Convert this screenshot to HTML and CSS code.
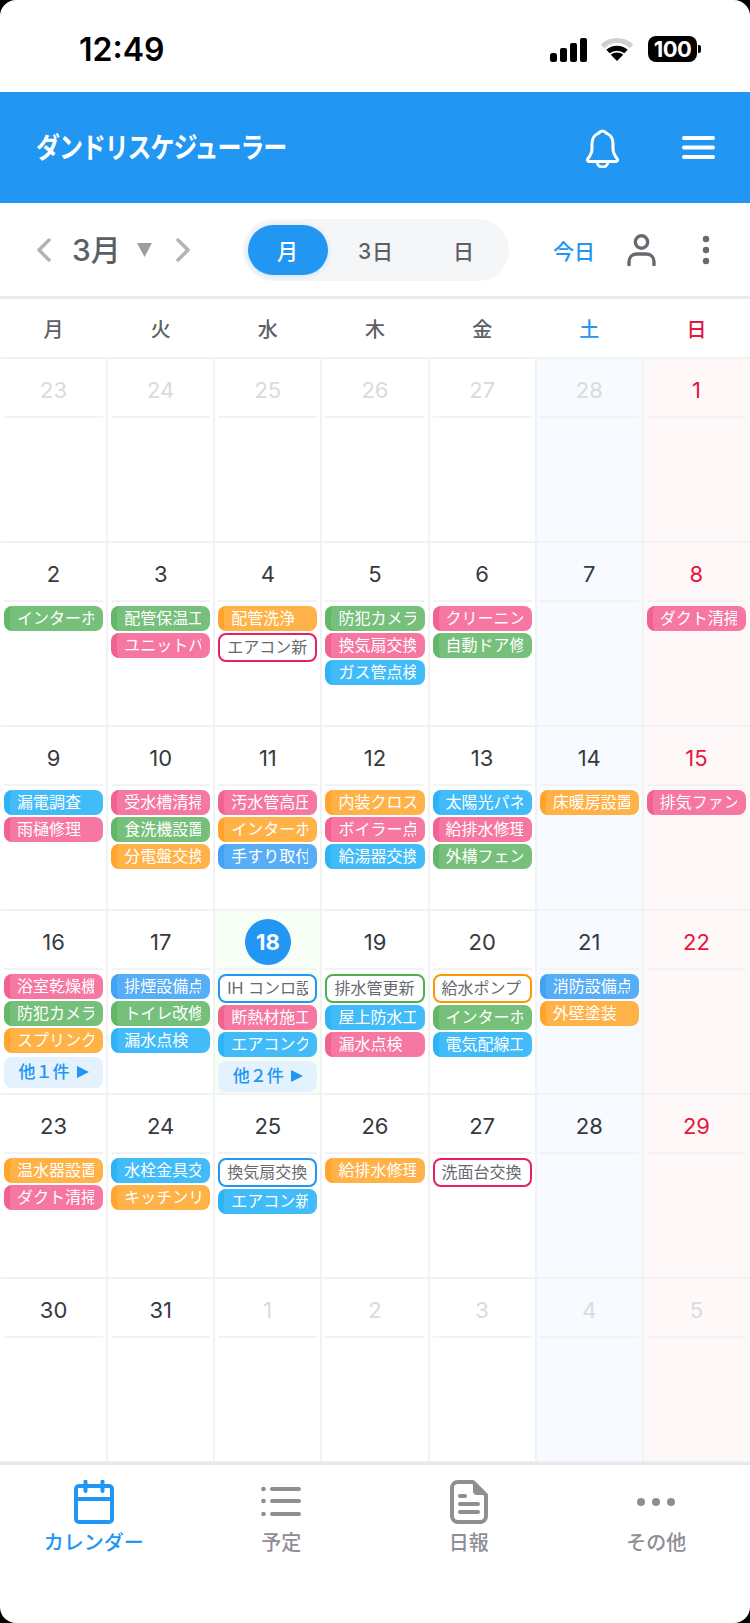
FILE: index.html
```html
<!DOCTYPE html>
<html lang="ja">
<head>
<meta charset="utf-8">
<title>ダンドリスケジューラー</title>
<link rel="stylesheet" href="styles.css">
</head>
<body>
<div class="page">
  <div class="status">
    <span class="time">12:49</span>
    <div class="status-icons">
      <svg class="signal" width="37" height="24" viewBox="0 0 37 24"><rect x="0" y="15" width="7" height="9" rx="2.5"/><rect x="10" y="10" width="7" height="14" rx="2"/><rect x="20" y="5" width="7" height="19" rx="2"/><rect x="30" y="0" width="7" height="24" rx="2"/></svg>
      <svg class="wifi" width="32" height="24" viewBox="0 0 32 24"><path class="wifi-far" d="M1.500 8.500C9.500 0.500 22.500 0.500 30.500 8.500"/><path class="wifi-near" d="M7 13.500C12 9 20 9 25 13.500"/><path class="wifi-tip" d="M16 23L9.800 16.800C13 13.600 19 13.600 22.200 16.800Z"/></svg>
      <div class="battery"><span class="battery-body">100</span><span class="battery-nub"></span></div>
    </div>
  </div>

  <header class="appbar">
    <span class="logo">ダンドリスケジューラー</span>
    <div class="appbar-actions">
      <svg width="33" height="39" viewBox="0 0 33 39" class="bell"><path d="M16.500 2C18.800 2 19.600 4 21.800 5C25.400 6.800 27 10 27 15V20C27 24 29 27 31.300 30C32 31.200 31.400 32.500 30 32.500H3C1.600 32.500 1 31.200 1.700 30C4 27 6 24 6 20V15C6 10 7.600 6.800 11.200 5C13.400 4 14.200 2 16.500 2Z"/><path d="M11 32.500A5.500 5.500 0 0 0 22 32.500"/></svg>
      <svg width="33" height="23" viewBox="0 0 33 23" class="burger"><rect y="0" width="33" height="4" rx="2"/><rect y="9.500" width="33" height="4" rx="2"/><rect y="19" width="33" height="4" rx="2"/></svg>
    </div>
  </header>

  <div class="toolbar">
    <svg class="chev prev" width="15" height="24" viewBox="0 0 15 24"><path d="M13 2L3 12L13 22"/></svg>
    <span class="month">3月</span>
    <svg class="caret" width="15" height="14" viewBox="0 0 15 14"><path d="M0 0H15L7.500 14Z"/></svg>
    <svg class="chev next" width="15" height="24" viewBox="0 0 15 24"><path d="M2 2L12 12L2 22"/></svg>
    <div class="segment">
      <span class="seg active">月</span>
      <span class="seg">3日</span>
      <span class="seg">日</span>
    </div>
    <span class="today-link">今日</span>
    <svg class="person" width="29" height="32" viewBox="0 0 29 32"><circle cx="14.500" cy="8" r="6.200"/><path d="M2 31V28C2 23.500 5 20 9.500 20H19.500C24 20 27 23.500 27 28V31"/></svg>
    <svg class="kebab" width="8" height="30" viewBox="0 0 8 30"><circle cx="4" cy="4" r="3.200"/><circle cx="4" cy="15" r="3.200"/><circle cx="4" cy="26" r="3.200"/></svg>
  </div>

  <div class="weekdays">
    <span>月</span><span>火</span><span>水</span><span>木</span><span>金</span><span class="sat-label">土</span><span class="sun-label">日</span>
  </div>

  <div class="grid">
    <div class="cell muted"><div class="date"><b>23</b></div></div>
    <div class="cell muted"><div class="date"><b>24</b></div></div>
    <div class="cell muted"><div class="date"><b>25</b></div></div>
    <div class="cell muted"><div class="date"><b>26</b></div></div>
    <div class="cell muted"><div class="date"><b>27</b></div></div>
    <div class="cell muted sat"><div class="date"><b>28</b></div></div>
    <div class="cell sun"><div class="date"><b>1</b></div></div>

    <div class="cell"><div class="date"><b>2</b></div>
      <div class="ev green"><span>インターホ</span></div></div>
    <div class="cell"><div class="date"><b>3</b></div>
      <div class="ev green"><span>配管保温工</span></div>
      <div class="ev pink"><span>ユニットバ</span></div></div>
    <div class="cell"><div class="date"><b>4</b></div>
      <div class="ev orange"><span>配管洗浄</span></div>
      <div class="ev out pink"><span>エアコン新</span></div></div>
    <div class="cell"><div class="date"><b>5</b></div>
      <div class="ev green"><span>防犯カメラ</span></div>
      <div class="ev pink"><span>換気扇交換</span></div>
      <div class="ev sky"><span>ガス管点検</span></div></div>
    <div class="cell"><div class="date"><b>6</b></div>
      <div class="ev pink"><span>クリーニン</span></div>
      <div class="ev green"><span>自動ドア修</span></div></div>
    <div class="cell sat"><div class="date"><b>7</b></div></div>
    <div class="cell sun"><div class="date"><b>8</b></div>
      <div class="ev pink"><span>ダクト清掃</span></div></div>

    <div class="cell"><div class="date"><b>9</b></div>
      <div class="ev sky"><span>漏電調査</span></div>
      <div class="ev pink"><span>雨樋修理</span></div></div>
    <div class="cell"><div class="date"><b>10</b></div>
      <div class="ev pink"><span>受水槽清掃</span></div>
      <div class="ev green"><span>食洗機設置</span></div>
      <div class="ev orange"><span>分電盤交換</span></div></div>
    <div class="cell"><div class="date"><b>11</b></div>
      <div class="ev pink"><span>汚水管高圧</span></div>
      <div class="ev orange"><span>インターホ</span></div>
      <div class="ev blue"><span>手すり取付</span></div></div>
    <div class="cell"><div class="date"><b>12</b></div>
      <div class="ev orange"><span>内装クロス</span></div>
      <div class="ev pink"><span>ボイラー点</span></div>
      <div class="ev sky"><span>給湯器交換</span></div></div>
    <div class="cell"><div class="date"><b>13</b></div>
      <div class="ev sky"><span>太陽光パネ</span></div>
      <div class="ev pink"><span>給排水修理</span></div>
      <div class="ev green"><span>外構フェン</span></div></div>
    <div class="cell sat"><div class="date"><b>14</b></div>
      <div class="ev orange"><span>床暖房設置</span></div></div>
    <div class="cell sun"><div class="date"><b>15</b></div>
      <div class="ev pink"><span>排気ファン</span></div></div>

    <div class="cell"><div class="date"><b>16</b></div>
      <div class="ev pink"><span>浴室乾燥機</span></div>
      <div class="ev green"><span>防犯カメラ</span></div>
      <div class="ev orange"><span>スプリンク</span></div>
      <div class="more">他１件<i class="tri"></i></div></div>
    <div class="cell"><div class="date"><b>17</b></div>
      <div class="ev blue"><span>排煙設備点</span></div>
      <div class="ev green"><span>トイレ改修</span></div>
      <div class="ev sky"><span>漏水点検</span></div></div>
    <div class="cell today"><div class="date"><b>18</b></div>
      <div class="ev out blue"><span>IH コンロ設</span></div>
      <div class="ev pink"><span>断熱材施工</span></div>
      <div class="ev sky"><span>エアコンク</span></div>
      <div class="more">他２件<i class="tri"></i></div></div>
    <div class="cell"><div class="date"><b>19</b></div>
      <div class="ev out green"><span>排水管更新</span></div>
      <div class="ev sky"><span>屋上防水工</span></div>
      <div class="ev pink"><span>漏水点検</span></div></div>
    <div class="cell"><div class="date"><b>20</b></div>
      <div class="ev out orange"><span>給水ポンプ</span></div>
      <div class="ev green"><span>インターホ</span></div>
      <div class="ev sky"><span>電気配線工</span></div></div>
    <div class="cell sat"><div class="date"><b>21</b></div>
      <div class="ev blue"><span>消防設備点</span></div>
      <div class="ev orange"><span>外壁塗装</span></div></div>
    <div class="cell sun"><div class="date"><b>22</b></div></div>

    <div class="cell"><div class="date"><b>23</b></div>
      <div class="ev orange"><span>温水器設置</span></div>
      <div class="ev pink"><span>ダクト清掃</span></div></div>
    <div class="cell"><div class="date"><b>24</b></div>
      <div class="ev sky"><span>水栓金具交</span></div>
      <div class="ev orange"><span>キッチンリ</span></div></div>
    <div class="cell"><div class="date"><b>25</b></div>
      <div class="ev out blue"><span>換気扇交換</span></div>
      <div class="ev sky"><span>エアコン新</span></div></div>
    <div class="cell"><div class="date"><b>26</b></div>
      <div class="ev orange"><span>給排水修理</span></div></div>
    <div class="cell"><div class="date"><b>27</b></div>
      <div class="ev out pink"><span>洗面台交換</span></div></div>
    <div class="cell sat"><div class="date"><b>28</b></div></div>
    <div class="cell sun"><div class="date"><b>29</b></div></div>

    <div class="cell"><div class="date"><b>30</b></div></div>
    <div class="cell"><div class="date"><b>31</b></div></div>
    <div class="cell muted"><div class="date"><b>1</b></div></div>
    <div class="cell muted"><div class="date"><b>2</b></div></div>
    <div class="cell muted"><div class="date"><b>3</b></div></div>
    <div class="cell muted sat"><div class="date"><b>4</b></div></div>
    <div class="cell muted sun"><div class="date"><b>5</b></div></div>
  </div>

  <nav class="tabs">
    <div class="tab current">
      <svg width="40" height="44" viewBox="0 0 40 44"><rect x="2" y="6" width="36" height="36" rx="3"/><path d="M2 19H38M11.500 1.500V11M28.500 1.500V11"/></svg>
      <span>カレンダー</span>
    </div>
    <div class="tab">
      <svg width="40" height="44" viewBox="0 0 40 44"><circle cx="2.500" cy="9" r="2.300" class="solid"/><circle cx="2.500" cy="21" r="2.300" class="solid"/><circle cx="2.500" cy="34" r="2.300" class="solid"/><path d="M11 9H38M11 21H38M11 34H38"/></svg>
      <span>予定</span>
    </div>
    <div class="tab">
      <svg width="38" height="44" viewBox="0 0 38 44"><path d="M8 2H23L36 15V36C36 39.500 33.500 42 30 42H8C4.500 42 2 39.500 2 36V8C2 4.500 4.500 2 8 2Z"/><path class="solid" d="M23 2V11C23 13.500 24.500 15 27 15H36Z"/><path d="M10 16H15M10 24H28M10 32H28"/></svg>
      <span>日報</span>
    </div>
    <div class="tab">
      <svg width="40" height="44" viewBox="0 0 40 44"><circle cx="5" cy="22" r="4" class="solid"/><circle cx="20" cy="22" r="4" class="solid"/><circle cx="35" cy="22" r="4" class="solid"/></svg>
      <span>その他</span>
    </div>
  </nav>
  <div class="screen-corners"></div>
</div>
</body>
</html>
```
FILE: styles.css
```css
* { box-sizing: border-box; }
html, body { margin: 0; padding: 0; background: #fff; }
body { font-family: Inter, "Noto Sans CJK JP", sans-serif; }
.page { position: relative; width: 750px; height: 1623px; overflow: hidden; display: flex; flex-direction: column; background: #fff; }

/* status bar */
.status { height: 92px; flex: none; display: flex; justify-content: space-between; padding: 36px 49px 0 79px; }
.time { font-size: 32px; font-weight: 600; line-height: 28px; color: #000; }
.status-icons { display: flex; align-items: flex-start; }
.signal { margin: 2px 14px 0 0; fill: #000; }
.wifi { margin: 2px 15px 0 0; }
.wifi path { fill: none; stroke-width: 5; stroke: #000; }
.wifi .wifi-far { stroke: #cfcfcf; }
.wifi .wifi-tip { fill: #000; stroke: none; }
.battery { display: flex; align-items: center; }
.battery-body { width: 49px; height: 26px; border-radius: 8px; background: #000; color: #fff; font-size: 22px; font-weight: 700; letter-spacing: -.5px; line-height: 26px; text-align: center; }
.battery-nub { width: 3px; height: 8px; background: #000; border-radius: 0 2px 2px 0; margin-left: 1px; }

/* app bar */
.appbar { height: 111px; flex: none; background: #2196f3; display: flex; align-items: center; justify-content: space-between; padding: 0 35px 0 36px; }
.logo { display: inline-block; color: #fff; font-size: 24px; font-weight: 700; letter-spacing: -1.1px; line-height: 32px; transform: scaleY(1.2); }
.appbar-actions { display: flex; align-items: center; gap: 63px; }
.bell { fill: none; stroke: #fff; stroke-width: 3; stroke-linejoin: round; stroke-linecap: round; margin-top: 2px; }
.burger { fill: #fff; }

/* toolbar */
.toolbar { height: 96px; flex: none; display: flex; align-items: center; padding-left: 36px; border-bottom: 3px solid #e8eaed; }
.chev { fill: none; stroke: #b0b3b8; stroke-width: 3.5; stroke-linecap: round; stroke-linejoin: round; }
.month { margin-left: 21px; width: 46px; font-size: 30px; font-weight: 500; line-height: 40px; color: #5a5f66; white-space: nowrap; }
.caret { margin-left: 19px; fill: #9a9da2; }
.next { margin-left: 24px; }
.segment { margin-left: 52px; width: 266px; height: 62px; padding: 6px 5px; border-radius: 31px; background: #f5f6f8; display: grid; grid-template-columns: repeat(3, 1fr); gap: 8px; }
.seg { display: flex; align-items: center; justify-content: center; border-radius: 25px; font-size: 21px; font-weight: 500; letter-spacing: 1px; color: #5c6066; }
.seg.active { background: #2196f3; color: #fff; box-shadow: 0 1px 6px rgba(33, 150, 243, .18); }
.today-link { margin-left: 44px; width: 42px; font-size: 21px; font-weight: 500; color: #2196f3; white-space: nowrap; }
.person { margin-left: 32px; fill: none; stroke: #666a70; stroke-width: 3.4; stroke-linecap: round; }
.kebab { margin-left: 46px; fill: #666a70; }

/* weekdays */
.weekdays { height: 59px; flex: none; display: grid; grid-template-columns: repeat(7, 1fr); align-items: center; text-align: center; font-size: 20px; font-weight: 500; color: #5c6066; border-bottom: 1px solid #f1f2f4; }
.sat-label { color: #2196f3; }
.sun-label { color: #e5173f; }

/* grid */
.grid { height: 1104px; flex: none; display: grid; grid-template-columns: repeat(7, 1fr); grid-template-rows: repeat(6, 184px); }
.cell { border: 1px solid #f1f2f4; padding: 8px 3px 0; display: flex; flex-direction: column; gap: 2px; min-width: 0; overflow: hidden; }
.cell:nth-child(7n+1) { border-left-color: transparent; }
.cell:nth-child(7n) { border-right-color: transparent; }
.sat { background: #f7fafe; }
.sun { background: #fef8f8; }
.today { background: #f6fef6; }
.date { height: 51px; margin-bottom: 2px; flex: none; text-align: center; border-bottom: 2px solid #f2f3f4; }
.date b { display: inline-block; width: 46px; height: 46px; border-radius: 50%; font-size: 22px; font-weight: 400; line-height: 46px; color: #36393e; }
.sun .date b { color: #e5173f; }
.muted .date b, .muted.sun .date b { color: #d8dcdc; }
.today .date b { background: #2196f3; color: #fff; font-weight: 700; }

/* events */
.ev { flex: none; height: 25px; border-left: 6px solid; border-radius: 8px; padding: 0 9px 0 7px; color: #fff; font-size: 16px; line-height: 25px; }
.ev span { display: block; overflow: hidden; white-space: nowrap; }
.pink { background: #f577a2; border-color: #f0628f; }
.green { background: #77c07b; border-color: #62b867; }
.orange { background: #ffb247; border-color: #ffa52e; }
.sky { background: #42bcf8; border-color: #2eb3f6; }
.blue { background: #57adf6; border-color: #42a2f4; }
.ev.out { height: 29px; background: #fff; border-width: 2px; border-style: solid; padding: 0 7px; color: #666a70; line-height: 25px; }
.ev.out.pink { border-color: #e91e63; }
.ev.out.blue { border-color: #2196f3; }
.ev.out.green { border-color: #4caf50; }
.ev.out.orange { border-color: #ff9800; }
.more { flex: none; height: 31px; margin-top: 2px; border-radius: 8px; background: #e3f2fd; color: #2196f3; font-size: 17px; font-weight: 500; line-height: 31px; text-align: center; }
.tri { display: inline-block; margin-left: 7px; border-left: 12px solid #2196f3; border-top: 6px solid transparent; border-bottom: 6px solid transparent; }

/* bottom nav */
.tabs { flex: 1; display: grid; grid-template-columns: repeat(4, 1fr); border-top: 3px solid #e6e8eb; padding-top: 15px; align-items: start; background: #fff; }
.tab { display: flex; flex-direction: column; align-items: center; gap: 6px; color: #8e8e93; font-size: 20px; font-weight: 500; line-height: 26px; }
.tab svg { fill: none; stroke: #8e8e93; stroke-width: 4; stroke-linecap: round; stroke-linejoin: round; }
.tab .solid { fill: #8e8e93; stroke: none; }
.tab.current { color: #2196f3; }
.tab.current svg { stroke: #2196f3; }

/* rounded screen corners of the device */
.screen-corners { position: absolute; inset: 0; border-radius: 16px; box-shadow: 0 0 0 16px #000; pointer-events: none; }
```
